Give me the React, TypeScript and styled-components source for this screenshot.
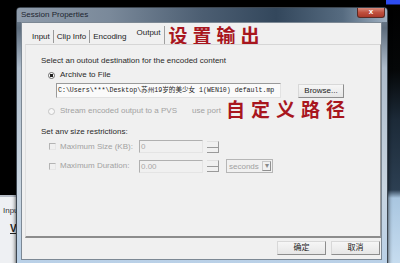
import * as React from 'react';
import styled, { createGlobalStyle } from 'styled-components';

const GlobalStyle = createGlobalStyle`
	html, body {
		margin: 0;
		padding: 0;
		background: #000;
	}
	* {
		box-sizing: border-box;
	}
`;

const UI = '"Liberation Sans", "Noto Sans CJK SC", sans-serif';
const CJK = '"Noto Sans CJK SC", "Noto Sans", sans-serif';

const App = () => {
	return (
		<>
			<GlobalStyle />
			<Desktop>
				<BackWindow>
					<BackTab>Input</BackTab>
					<BackLabel>View</BackLabel>
				</BackWindow>
				<BackGlass />
				<Dialog>
					<TitleBar>
						<Title>Session Properties</Title>
						<CloseButton>x</CloseButton>
					</TitleBar>
					<Client>
						<TabRow>
							<Tab>Input</Tab>
							<TabSep />
							<Tab>Clip Info</Tab>
							<TabSep />
							<Tab>Encoding</Tab>
							<Tab selected>Output</Tab>
							<Note>设置输出</Note>
						</TabRow>
						<Panel>
							<Label>Select an outout destination for the encoded content</Label>
							<OptionRow top={4}>
								<Radio checked />
								<Label>Archive to File</Label>
							</OptionRow>
							<PathRow>
								<PathField>C:\Users\***\Desktop\苏州19岁的美少女 1(WEN10) default.mp</PathField>
								<Button width={46}>Browse...</Button>
							</PathRow>
							<OptionRow top={8}>
								<Radio disabled />
								<Label disabled>Stream encoded output to a PVS</Label>
								<Label disabled indent={10}>use port</Label>
								<PathNote>自定义路径</PathNote>
							</OptionRow>
							<Label top={11}>Set anv size restrictions:</Label>
							<LimitRow top={3}>
								<Check />
								<Label disabled>Maximum Size (KB):</Label>
								<Field>0</Field>
								<Spin />
							</LimitRow>
							<LimitRow top={6}>
								<Check />
								<Label disabled>Maximum Duration:</Label>
								<Field>0.00</Field>
								<Spin />
								<Select>
									<span>seconds</span>
									<SelectArrow>▾</SelectArrow>
								</Select>
							</LimitRow>
						</Panel>
						<ButtonRow>
							<Button width={49}>确定</Button>
							<Button width={49}>取消</Button>
						</ButtonRow>
					</Client>
				</Dialog>
			</Desktop>
		</>
	);
};

export default App;

const Desktop = styled.div`
	position: relative;
	width: 400px;
	height: 263px;
	overflow: hidden;
	background: #000;
	font-family: ${UI};
`;

const BackWindow = styled.div`
	position: absolute;
	left: 0;
	top: 195px;
	width: 60px;
	height: 80px;
	background: #eef0f3;
	border-top: 2px solid #b5bcc6;
	padding: 9px 0 0 3px;
	display: flex;
	flex-direction: column;
	gap: 8px;
`;

const BackTab = styled.div`
	font-size: 8px;
	color: #333;
`;

const BackLabel = styled.div`
	font-size: 10px;
	font-weight: 700;
	color: #222;
	text-decoration: underline;
	padding-left: 7px;
`;

const BackGlass = styled.div`
	position: absolute;
	left: 386px;
	top: 0;
	width: 14px;
	height: 263px;
	background: linear-gradient(
		180deg,
		#2e4cf0 0px,
		#2e4cf0 4px,
		#000 5px,
		#050708 70px,
		#1c2a38 120px,
		#2c3f52 190px,
		#a9c6e0 198px,
		#c6dcef 263px
	);
`;

const Dialog = styled.div`
	position: absolute;
	left: 16px;
	top: 7px;
	width: 372px;
	height: 262px;
	display: flex;
	flex-direction: column;
	padding: 0 5px 0 4px;
	border-radius: 4px 4px 0 0;
	border: 1px solid #3d4650;
	background: linear-gradient(
		180deg,
		#7d8b9a 0px,
		#5d6c7c 20px,
		#aebccb 60px,
		#c9d5e0 180px,
		#b8d0e8 262px
	);
	box-shadow: 0 0 4px rgba(0, 0, 0, 0.8);
`;

const TitleBar = styled.div`
	height: 14px;
	display: flex;
	align-items: flex-start;
	justify-content: space-between;
	margin: 0 -5px 0 -4px;
	padding: 0 2px 0 3px;
	background: linear-gradient(
		90deg,
		#8f9cab 0%,
		#7a899a 25%,
		#4c5e72 50%,
		#33475c 70%,
		#566b80 88%,
		#9fb0c1 100%
	);
	border-radius: 3px 3px 0 0;
`;

const Title = styled.div`
	font-size: 8px;
	line-height: 14px;
	color: #1d2530;
	padding-left: 1px;
`;

const CloseButton = styled.div`
	width: 28px;
	height: 10px;
	border: 1px solid #5a2a24;
	border-top: none;
	border-radius: 0 0 3px 3px;
	background: linear-gradient(180deg, #d88a7c 0%, #c0503e 50%, #a9392a 100%);
	color: #fff;
	font-size: 8px;
	font-weight: 700;
	line-height: 8px;
	text-align: center;
`;

const Client = styled.div`
	height: 238px;
	background: #f0f0f0;
	border: 1px solid #7c8894;
	display: flex;
	flex-direction: column;
	padding: 3px 0 0 3px;
`;

const TabRow = styled.div`
	height: 18px;
	display: flex;
	align-items: flex-end;
	padding-left: 4px;
`;

const Tab = styled.div<{ selected?: boolean }>`
	font-size: 8px;
	color: #222;
	height: ${p => (p.selected ? 18 : 15)}px;
	line-height: ${p => (p.selected ? 14 : 15)}px;
	padding: 0 3px;
	margin-left: ${p => (p.selected ? 4 : 0)}px;
	border-right: ${p => (p.selected ? '1px solid #a0a0a0' : 'none')};
	align-self: flex-end;
`;

const TabSep = styled.div`
	width: 1px;
	height: 13px;
	background: #9a9a9a;
	margin-bottom: 1px;
`;

const Note = styled.div`
	font-family: ${CJK};
	font-size: 19px;
	font-weight: 700;
	letter-spacing: 5px;
	line-height: 18px;
	color: #a8161e;
	margin-left: 4px;
	align-self: center;
	white-space: nowrap;
`;

const Panel = styled.div`
	height: 194px;
	border: 1px solid #d6d6d6;
	border-right-color: #9c9c9c;
	border-bottom: 2px solid #8c8c8c;
	border-left-color: #e0e0e0;
	padding: 11px 0 0 15px;
	display: flex;
	flex-direction: column;
	align-items: flex-start;
`;

const Label = styled.div<{ disabled?: boolean; top?: number; indent?: number }>`
	font-size: 8px;
	line-height: 10px;
	color: ${p => (p.disabled ? '#a2a2a2' : '#2a2a2a')};
	margin-top: ${p => p.top || 0}px;
	margin-left: ${p => p.indent || 0}px;
	white-space: nowrap;
`;

const OptionRow = styled.div<{ top: number }>`
	position: relative;
	display: flex;
	align-items: center;
	gap: 5px;
	margin-top: ${p => p.top}px;
	padding-left: 7px;
`;

const Radio = styled.div<{ checked?: boolean; disabled?: boolean }>`
	width: 7px;
	height: 7px;
	border-radius: 50%;
	border: 1px solid ${p => (p.disabled ? '#c4c4c4' : '#6a6a6a')};
	background: ${p => (p.checked ? 'radial-gradient(circle, #222 0 1.6px, #fff 2px)' : '#f7f7f7')};
`;

const PathNote = styled.div`
	position: absolute;
	left: 185px;
	top: -6px;
	font-family: ${CJK};
	font-size: 19px;
	font-weight: 700;
	letter-spacing: 6px;
	line-height: 17px;
	color: #a8161e;
	white-space: nowrap;
`;

const PathRow = styled.div`
	display: flex;
	align-items: center;
	gap: 17px;
	margin-top: 3px;
	padding-left: 15px;
`;

const PathField = styled.div`
	width: 225px;
	height: 15px;
	border: 1px solid #9a9a9a;
	border-right-color: #e2e2e2;
	border-bottom-color: #e2e2e2;
	background: #fafafa;
	font-family: "Liberation Mono", "Noto Sans CJK SC", monospace;
	font-size: 6.6px;
	line-height: 13px;
	color: #1a1a1a;
	padding-left: 1px;
	white-space: nowrap;
	overflow: hidden;
`;

const Button = styled.div<{ width: number }>`
	width: ${p => p.width}px;
	height: 14px;
	border: 1px solid #8d8d8d;
	border-top-color: #d8d8d8;
	border-left-color: #d8d8d8;
	background: linear-gradient(180deg, #f6f6f6, #e6e6e6);
	font-family: ${UI};
	font-size: 8px;
	line-height: 12px;
	text-align: center;
	color: #222;
`;

const LimitRow = styled.div<{ top: number }>`
	display: flex;
	align-items: center;
	margin-top: ${p => p.top}px;
	padding-left: 8px;
	& > ${Label} {
		width: 79px;
		margin-left: 4px;
	}
`;

const Check = styled.div`
	width: 7px;
	height: 7px;
	border: 1px solid #b4b4b4;
	border-right-color: #e6e6e6;
	border-bottom-color: #e6e6e6;
`;

const Field = styled.div`
	width: 64px;
	height: 13px;
	border: 1px solid #b0b0b0;
	border-right-color: #e4e4e4;
	border-bottom-color: #e4e4e4;
	font-size: 8px;
	line-height: 11px;
	color: #a8a8a8;
	padding-left: 1px;
`;

const Spin = styled.div`
	width: 12px;
	height: 12px;
	margin-left: 4px;
	border-right: 1px solid #9a9a9a;
	border-bottom: 1px solid #9a9a9a;
	border-top: 1px solid #e0e0e0;
	background: linear-gradient(180deg, transparent 5px, #9a9a9a 5px, #9a9a9a 6px, transparent 6px);
`;

const Select = styled.div`
	width: 47px;
	height: 14px;
	margin-left: 7px;
	border: 1px solid #b6b6b6;
	display: flex;
	align-items: center;
	justify-content: space-between;
	padding-left: 2px;
	font-size: 8px;
	color: #a0a0a0;
`;

const SelectArrow = styled.div`
	width: 9px;
	height: 10px;
	margin-right: 1px;
	border: 1px solid #c8c8c8;
	border-right-color: #909090;
	border-bottom-color: #909090;
	font-size: 8px;
	line-height: 8px;
	text-align: center;
	color: #8a8a8a;
`;

const ButtonRow = styled.div`
	display: flex;
	justify-content: flex-end;
	gap: 5px;
	padding: 3px 1px 0 0;
`;
